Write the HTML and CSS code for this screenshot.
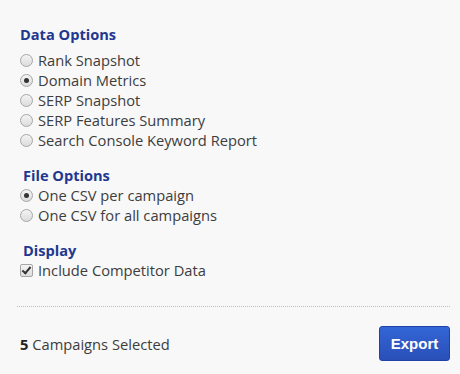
FILE: index.html
```html
<!DOCTYPE html>
<html lang="en">
<head>
    <meta charset="UTF-8">
    <title>Export Options</title>
    <link rel="stylesheet" href="styles.css">
</head>
<body>
    <div class="panel">
        <div class="group">
            <h3 class="group-title first">Data Options</h3>
            <label class="opt"><input type="radio" name="data"> Rank Snapshot</label>
            <label class="opt"><input type="radio" name="data" checked> Domain Metrics</label>
            <label class="opt"><input type="radio" name="data"> SERP Snapshot</label>
            <label class="opt"><input type="radio" name="data"> SERP Features Summary</label>
            <label class="opt"><input type="radio" name="data"> Search Console Keyword Report</label>
        </div>

        <div class="group">
            <h3 class="group-title">File Options</h3>
            <label class="opt"><input type="radio" name="file" checked> One CSV per campaign</label>
            <label class="opt"><input type="radio" name="file"> One CSV for all campaigns</label>
        </div>

        <div class="group">
            <h3 class="group-title">Display</h3>
            <label class="opt"><input type="checkbox" checked> Include Competitor Data</label>
        </div>

        <div class="footer">
            <span class="count"><b>5</b> Campaigns Selected</span>
            <button class="btn-export">Export</button>
        </div>
    </div>
</body>
</html>
```

FILE: styles.css
```css
body {
    margin: 0;
    background: #f8f8f8;
    font-family: "Open Sans", sans-serif;
    color: #3d3d3d;
}
.panel {
    padding: 24px 10px 0 20px;
}
.group {
    display: flex;
    flex-direction: column;
    margin-bottom: 15px;
}
.group-title {
    margin: 0 0 0 3px;
    font-size: 14.6px;
    font-weight: bold;
    color: #22378f;
    line-height: 20px;
}
.group-title.first {
    margin: 0 0 6px 0;
}
.opt {
    display: flex;
    align-items: center;
    font-size: 14.7px;
    line-height: 20px;
    height: 20px;
}
.opt input {
    appearance: none;
    margin: 0 5px 0 0;
    width: 13px;
    height: 13px;
    border: 1px solid #a6a6a6;
    background: linear-gradient(#f4f4f4, #dcdcdc);
    position: relative;
}
.opt input[type="radio"] {
    border-radius: 50%;
}
.opt input[type="radio"]:checked::after {
    content: "";
    position: absolute;
    left: 3px;
    top: 3px;
    width: 5px;
    height: 5px;
    border-radius: 50%;
    background: #333;
}
.opt input[type="checkbox"] {
    border-radius: 2px;
}
.opt input[type="checkbox"]:checked::after {
    content: "";
    position: absolute;
    left: 3px;
    top: 0;
    width: 3px;
    height: 7px;
    border: solid #333;
    border-width: 0 2px 2px 0;
    transform: rotate(40deg);
}
.footer {
    margin: 26px 0 0 -3px;
    border-top: 1px dotted #bbb;
    display: flex;
    justify-content: space-between;
    align-items: center;
    padding: 19px 0 0 3px;
}
.count {
    font-size: 14.7px;
}
.count b {
    color: #222;
}
.btn-export {
    width: 71px;
    height: 35px;
    border: 1px solid #2140a8;
    border-radius: 3px;
    background: linear-gradient(#3366d6, #2a4fb8);
    color: #fff;
    font-family: "Liberation Sans", Arial, sans-serif;
    font-size: 15px;
    font-weight: bold;
}
```
